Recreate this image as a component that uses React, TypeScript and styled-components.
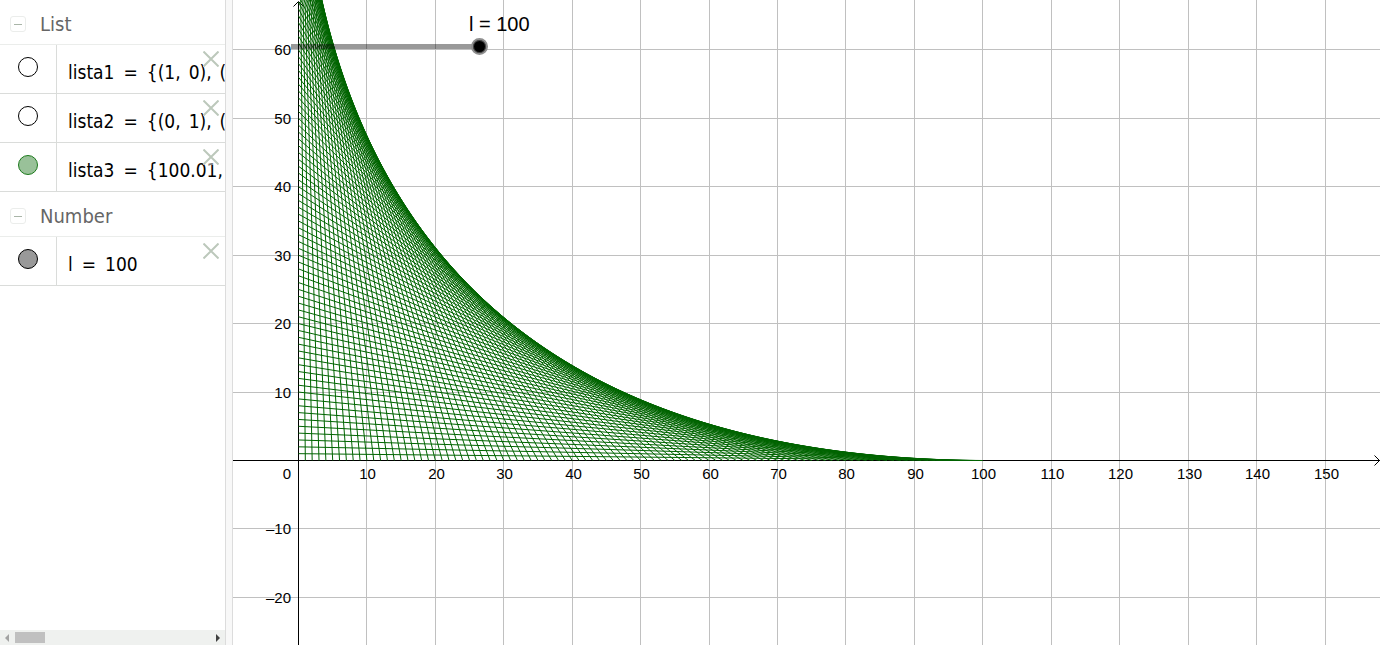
import React, { useState } from 'react';
import styled, { createGlobalStyle } from 'styled-components';

const GlobalStyle = createGlobalStyle`
  * { box-sizing: border-box; }
  body { margin: 0; background: #fff; font-family: "Liberation Sans", Arial, sans-serif; color: #000; }
`;

const Page = styled.div`
  display: flex;
  height: 100vh;
  padding: 0 2px 2px 0;
  overflow: hidden;
`;

const Sidebar = styled.aside`
  display: flex;
  flex-direction: column;
  flex: none;
  width: 225px;
`;

const Entries = styled.div`
  flex: 1;
  overflow: hidden;
`;

const GroupHeader = styled.h2`
  display: flex;
  align-items: center;
  gap: 14px;
  height: 45px;
  margin: 0;
  padding: 4px 10px 0;
  border-bottom: 1px solid #ebedeb;
  font: 400 20px/24px "DejaVu Sans Condensed", "DejaVu Sans", sans-serif;
  font-stretch: condensed;
  color: #666;
`;

const CollapseButton = styled.button`
  display: grid;
  place-items: center;
  width: 16px;
  height: 16px;
  padding: 0;
  border: 1px solid #ebedeb;
  border-radius: 3px;
  background: #fff;

  &::before {
    content: "";
    width: 8px;
    height: 1px;
    background: #a9b5a8;
  }
`;

const List = styled.ul`
  margin: 0;
  padding: 0;
  list-style: none;
`;

const Row = styled.li`
  display: flex;
  position: relative;
  height: 49px;
  border-bottom: 1px solid #dadcda;
`;

const MarbleCell = styled.div`
  flex: none;
  display: flex;
  justify-content: center;
  width: 57px;
  padding-top: 12px;
  border-right: 1px solid #dadcda;
`;

const Marble = styled.button<{ $fill: string; $line: string }>`
  width: 20px;
  height: 20px;
  padding: 0;
  border: 1px solid ${(p) => p.$line};
  border-radius: 50%;
  background: ${(p) => p.$fill};
`;

const Definition = styled.div`
  display: flex;
  gap: 9px;
  flex: 1;
  min-width: 0;
  overflow: hidden;
  padding: 13px 0 0 11px;
  font: 400 19px/28px "DejaVu Sans Condensed", "DejaVu Sans", sans-serif;
  font-stretch: condensed;
  white-space: nowrap;
`;

const Value = styled.span`
  display: flex;
  gap: 8px;
`;

const DeleteButton = styled.button`
  position: absolute;
  top: 6px;
  right: 6px;
  width: 16px;
  height: 16px;
  padding: 0;
  border: 0;
  background: rgba(255, 255, 255, 0.5);
  line-height: 0;
`;

const ScrollBar = styled.div`
  display: flex;
  align-items: center;
  gap: 6px;
  height: 15px;
  padding: 0 5px;
  background: #eff1ef;
`;

const ScrollTrack = styled.div`
  flex: 1;
  height: 11px;
`;

const ScrollThumb = styled.div`
  width: 30px;
  height: 11px;
  background: #c0c0c0;
`;

const Splitter = styled.div`
  flex: none;
  width: 8px;
  border: solid #dcdcdc;
  border-width: 0 1px;
  background: #f8f8f8;
`;

const Graphics = styled.main`
  position: relative;
  flex: 1;
  min-width: 0;
  overflow: hidden;
`;

const Plot = styled.svg`
  display: block;
  width: 100%;
  height: 100%;

  text { font-size: 15px; fill: #000; }
`;

const SliderBox = styled.div`
  position: absolute;
  top: 12px;
  left: 58px;
  width: 197px;
`;

const SliderLabel = styled.label`
  display: block;
  padding-left: 178px;
  font-size: 20px;
  line-height: 24px;
  white-space: nowrap;
`;

const SliderInput = styled.input`
  display: block;
  appearance: none;
  width: 100%;
  height: 21px;
  margin: 0;
  background: linear-gradient(rgba(0, 0, 0, 0.4), rgba(0, 0, 0, 0.4)) 0 8px / 181px 5px no-repeat;

  &::-webkit-slider-thumb {
    appearance: none;
    width: 17px;
    height: 17px;
    border: 2px solid #8f8f8f;
    border-radius: 50%;
    background: #000;
    box-shadow: inset 0 0 0 1px #444;
  }
`;

const ORIGIN = { x: 65, y: 460 };
const UNIT = 6.8434;
const px = (x: number) => ORIGIN.x + x * UNIT + 0.5;
const py = (y: number) => ORIGIN.y - y * UNIT + 0.5;
const gx = (x: number) => Math.round(ORIGIN.x + x * UNIT) + 0.5;
const gy = (y: number) => Math.round(ORIGIN.y - y * UNIT) + 0.5;

const xTicks = Array.from({ length: 15 }, (_, i) => (i + 1) * 10);
const yTicks = [60, 50, 40, 30, 20, 10, -10, -20];

type Item = { name: string; value: string[]; fill: string; line: string };

const groups: { title: string; items: Item[] }[] = [
  {
    title: 'List',
    items: [
      { name: 'lista1', value: ['{(1,', '0),', '('], fill: '#fff', line: '#000' },
      { name: 'lista2', value: ['{(0,', '1),', '('], fill: '#fff', line: '#000' },
      { name: 'lista3', value: ['{100.01,'], fill: '#99c199', line: '#1c7a1c' },
    ],
  },
  {
    title: 'Number',
    items: [{ name: 'l', value: ['100'], fill: '#999', line: '#000' }],
  },
];

function EntryRow({ item }: { item: Item }) {
  return (
    <Row>
      <MarbleCell>
        <Marble $fill={item.fill} $line={item.line} aria-label={`Show or hide ${item.name}`} />
      </MarbleCell>
      <Definition>
        <span>{item.name}</span>
        <span>=</span>
        <Value>
          {item.value.map((part, i) => <span key={i}>{part}</span>)}
        </Value>
      </Definition>
      <DeleteButton aria-label={`Delete ${item.name}`}>
        <svg width="16" height="16" viewBox="0 0 16 16" stroke="#bcc8bb" strokeWidth="2">
          <path d="M0.5 0.5L15.5 15.5M15.5 0.5L0.5 15.5" />
        </svg>
      </DeleteButton>
    </Row>
  );
}

function Chart({ count }: { count: number }) {
  const segments = Array.from({ length: count }, (_, i) => i + 1);
  return (
    <Plot role="img" aria-label="Segments joining the two axes">
      <g stroke="#c0c0c0">
        {xTicks.map((t) => <line key={t} x1={gx(t)} x2={gx(t)} y1="0" y2="100%" />)}
        {yTicks.map((t) => <line key={t} x1="0" x2="100%" y1={gy(t)} y2={gy(t)} />)}
      </g>
      <g stroke="#000" fill="none">
        <line x1="0" x2="100%" y1={gy(0)} y2={gy(0)} />
        <line x1={gx(0)} x2={gx(0)} y1="2" y2="100%" />
        <path d="M60.5 6.5L65.5 1.5L70.5 6.5" />
        <svg x="100%" y={ORIGIN.y} overflow="visible">
          <path d="M-5.5 -4.5L-0.5 0.5L-5.5 5.5" />
        </svg>
      </g>
      <g textAnchor="middle">
        {xTicks.map((t) => <text key={t} x={gx(t) + 1} y="479">{t}</text>)}
      </g>
      <g textAnchor="end">
        {yTicks.map((t) => (
          <text key={t} x="58" y={gy(t) + 5}>{t < 0 ? `–${-t}` : t}</text>
        ))}
        <text x="58" y="479">0</text>
      </g>
      <g stroke="#006400" strokeWidth="1">
        {segments.map((i) => (
          <line key={i} x1={px(i)} y1={py(0)} x2={px(0)} y2={py(count + 1 - i)} />
        ))}
      </g>
    </Plot>
  );
}

export default function App() {
  const [length, setLength] = useState(100);
  return (
    <>
      <GlobalStyle />
      <Page>
        <Sidebar>
          <Entries>
            {groups.map((group) => (
              <section key={group.title}>
                <GroupHeader>
                  <CollapseButton aria-label={`Collapse ${group.title}`} />
                  {group.title}
                </GroupHeader>
                <List>
                  {group.items.map((item) => <EntryRow key={item.name} item={item} />)}
                </List>
              </section>
            ))}
          </Entries>
          <ScrollBar>
            <svg width="4" height="8"><path d="M4 0V8L0 4Z" fill="#a3a3a3" /></svg>
            <ScrollTrack><ScrollThumb /></ScrollTrack>
            <svg width="4" height="8"><path d="M0 0V8L4 4Z" fill="#404040" /></svg>
          </ScrollBar>
        </Sidebar>
        <Splitter />
        <Graphics>
          <Chart count={length} />
          <SliderBox>
            <SliderLabel htmlFor="length">l = {length}</SliderLabel>
            <SliderInput
              id="length"
              type="range"
              min="1"
              max="100"
              value={length}
              onChange={(e) => setLength(Number(e.target.value))}
            />
          </SliderBox>
        </Graphics>
      </Page>
    </>
  );
}
